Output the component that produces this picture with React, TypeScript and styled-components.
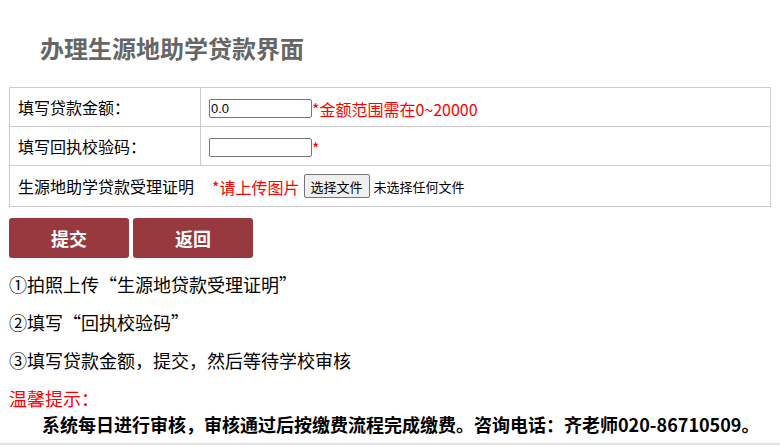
import styled, { createGlobalStyle } from "styled-components";

const GlobalStyle = createGlobalStyle`
    html, body {
        margin: 0;
        padding: 0;
        background: #fff;
    }
    body {
        font-family: "Noto Sans CJK SC", "Noto Sans", sans-serif;
        color: #000;
    }
`;

const Page = styled.div`
    padding: 0 9px;
    height: 443px;
    border-bottom: 2px solid #e4e4e4;
    overflow: hidden;
`;

const Title = styled.h2`
    margin: 0 0 20px 0;
    padding: 28px 0 0 31px;
    font-size: 24px;
    line-height: 39px;
    font-weight: bold;
    color: #666;
`;

const FormTable = styled.table`
    width: 762px;
    border-collapse: collapse;
    border: 1px solid #ccc;
`;

const Td = styled.td<{ $tall?: boolean }>`
    border: 1px solid #ccc;
    height: ${({ $tall }) => ($tall ? "40px" : "38px")};
    padding: 0 8px;
    font-size: 16px;
    line-height: 20px;
    vertical-align: middle;
    white-space: nowrap;
`;

const LabelTd = styled(Td)`
    width: 174px;
`;

const TextInput = styled.input`
    box-sizing: border-box;
    width: 103px;
    height: 19px;
    padding: 0 1px;
    margin: 0;
    border: 1px solid #767676;
    border-radius: 2px;
    font-family: "Liberation Sans", Arial, sans-serif;
    font-size: 13px;
    vertical-align: middle;
    outline: none;
`;

const Red = styled.span`
    color: #f00;
    font-size: 16px;
    vertical-align: middle;
`;

const UploadLabel = styled.span`
    vertical-align: middle;
    margin-right: 18px;
`;

const FileButton = styled.button`
    box-sizing: border-box;
    height: 24px;
    margin: 0 4px 0 4px;
    padding: 0 6px;
    border: 1px solid #767676;
    border-radius: 2px;
    background: #efefef;
    font-family: "Noto Sans CJK SC", sans-serif;
    font-size: 13px;
    color: #000;
    vertical-align: middle;
`;

const FileStatus = styled.span`
    font-size: 13px;
    vertical-align: middle;
`;

const ButtonRow = styled.div`
    display: flex;
    gap: 4px;
    margin-top: 11px;
`;

const ActionButton = styled.button`
    width: 120px;
    height: 40px;
    border: none;
    border-radius: 3px;
    background: #983940;
    color: #fff;
    font-family: "Noto Sans CJK SC", sans-serif;
    font-size: 18px;
    font-weight: bold;
    cursor: pointer;
`;

const Steps = styled.div`
    margin-top: 7px;
`;

const Step = styled.p`
    margin: 0;
    font-size: 18px;
    line-height: 38px;
`;

const TipTitle = styled.div`
    margin-top: 7px;
    color: #f00;
    font-size: 18px;
    line-height: 24px;
`;

const TipText = styled.div`
    margin-top: 2px;
    padding-left: 33px;
    font-size: 18px;
    line-height: 24px;
    font-weight: bold;
    white-space: nowrap;
`;

export default function App() {
    return (
        <>
            <GlobalStyle />
            <Page>
                <Title>办理生源地助学贷款界面</Title>
                <FormTable>
                    <tbody>
                        <tr>
                            <LabelTd>填写贷款金额：</LabelTd>
                            <Td>
                                <TextInput defaultValue="0.0" />
                                <Red>*金额范围需在0~20000</Red>
                            </Td>
                        </tr>
                        <tr>
                            <LabelTd>填写回执校验码：</LabelTd>
                            <Td>
                                <TextInput />
                                <Red>*</Red>
                            </Td>
                        </tr>
                        <tr>
                            <Td $tall colSpan={2}>
                                <UploadLabel>生源地助学贷款受理证明</UploadLabel>
                                <Red>*请上传图片</Red>
                                <FileButton type="button">选择文件</FileButton>
                                <FileStatus>未选择任何文件</FileStatus>
                            </Td>
                        </tr>
                    </tbody>
                </FormTable>
                <ButtonRow>
                    <ActionButton type="button">提交</ActionButton>
                    <ActionButton type="button">返回</ActionButton>
                </ButtonRow>
                <Steps>
                    <Step>①拍照上传“生源地贷款受理证明”</Step>
                    <Step>②填写“回执校验码”</Step>
                    <Step>③填写贷款金额，提交，然后等待学校审核</Step>
                </Steps>
                <TipTitle>温馨提示：</TipTitle>
                <TipText>系统每日进行审核，审核通过后按缴费流程完成缴费。咨询电话：齐老师020-86710509。</TipText>
            </Page>
        </>
    );
}
